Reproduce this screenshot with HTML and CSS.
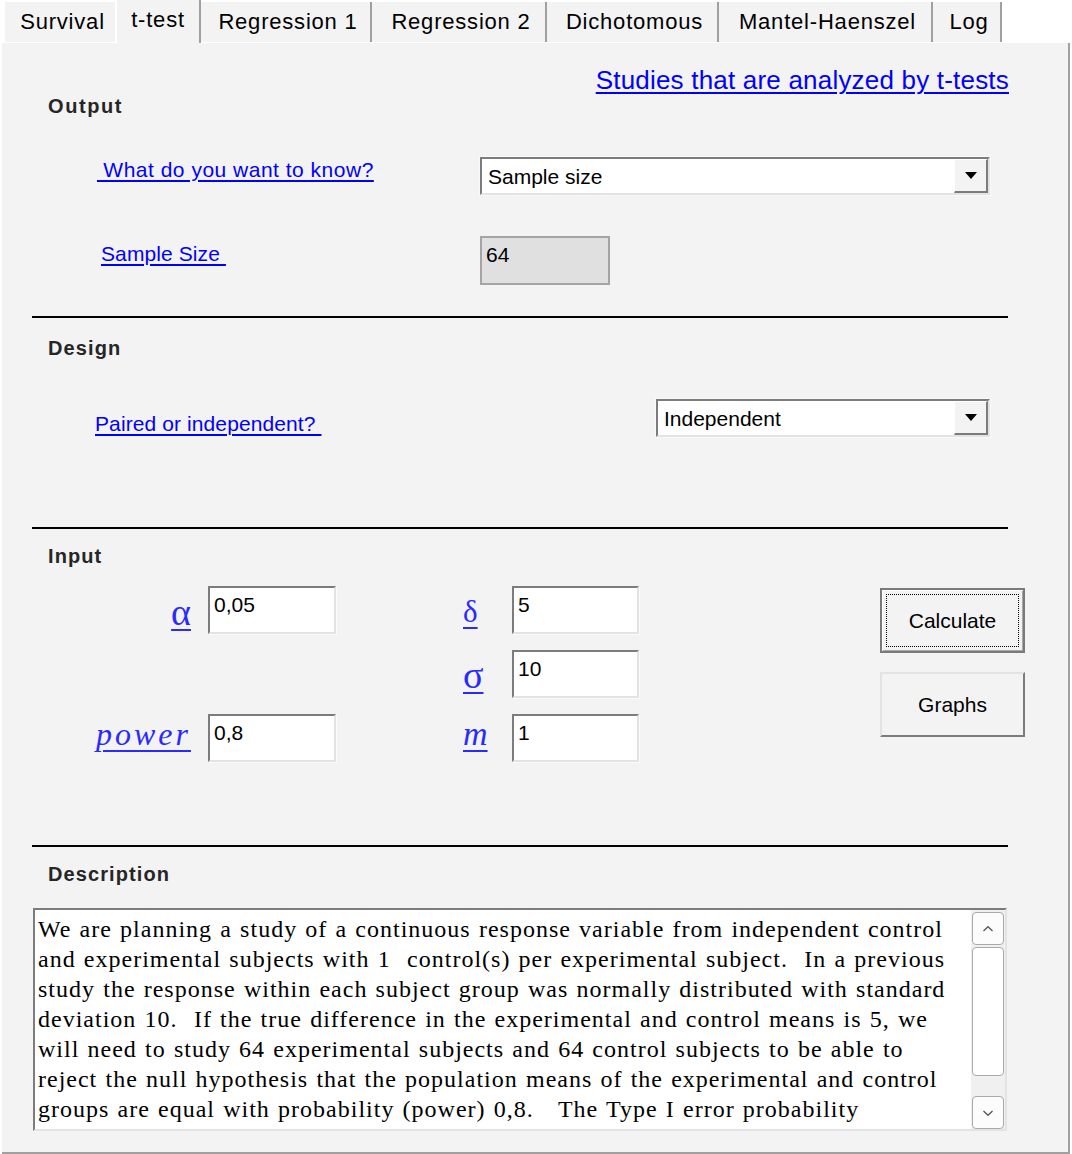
FILE: index.html
```html
<!DOCTYPE html>
<html lang="en">
<head>
<meta charset="utf-8">
<title>t-test</title>
<link rel="stylesheet" href="styles.css">
</head>
<body>
<div class="tabs">
  <div class="tab tab-survival">Survival</div>
  <div class="tab tab-active">t-test</div>
  <div class="tab tab-reg1">Regression 1</div>
  <div class="tab tab-reg2">Regression 2</div>
  <div class="tab tab-dich">Dichotomous</div>
  <div class="tab tab-mantel">Mantel-Haenszel</div>
  <div class="tab tab-log">Log</div>
</div>
<div class="panel">
  <div class="top-row">
    <h2 class="sec-title title-output">Output</h2>
    <a class="studies-link" href="#">Studies that are analyzed by t-tests</a>
  </div>
  <div class="form-row row-know">
    <a class="link link-know" href="#">&nbsp;What do you want to know?</a>
    <div class="combo combo-wide">
      <span class="combo-text">Sample size</span>
      <span class="combo-btn"><svg width="12" height="7" viewBox="0 0 12 7"><path d="M0 0H12L6 7Z" fill="#000"/></svg></span>
    </div>
  </div>
  <div class="form-row row-size">
    <a class="link link-size" href="#">Sample Size&nbsp;</a>
    <div class="readonly">64</div>
  </div>
  <div class="rule rule-1"></div>

  <h2 class="sec-title title-design">Design</h2>
  <div class="form-row row-design">
    <a class="link link-paired" href="#">Paired or independent?&nbsp;</a>
    <div class="combo combo-short">
      <span class="combo-text">Independent</span>
      <span class="combo-btn"><svg width="12" height="7" viewBox="0 0 12 7"><path d="M0 0H12L6 7Z" fill="#000"/></svg></span>
    </div>
  </div>
  <div class="rule rule-2"></div>

  <h2 class="sec-title title-input">Input</h2>
  <div class="input-grid">
    <a class="sym sym-alpha" href="#">α</a>
    <div class="field f-alpha">0,05</div>
    <a class="sym sym-power" href="#">power</a>
    <div class="field f-power">0,8</div>
    <a class="sym sym-delta" href="#">δ</a>
    <div class="field f-delta">5</div>
    <a class="sym sym-sigma" href="#">σ</a>
    <div class="field f-sigma">10</div>
    <a class="sym sym-m" href="#">m</a>
    <div class="field f-m">1</div>
    <div class="buttons">
      <div class="btn btn-default"><span class="btn-label">Calculate</span></div>
      <div class="btn btn-graphs"><span class="btn-label">Graphs</span></div>
    </div>
  </div>
  <div class="rule rule-3"></div>

  <h2 class="sec-title title-desc">Description</h2>
  <div class="memo">
    <div class="memo-text"><span class="memo-line">We are planning a study of a continuous response variable from independent control</span><span class="memo-line">and experimental subjects with 1  control(s) per experimental subject.  In a previous</span><span class="memo-line">study the response within each subject group was normally distributed with standard</span><span class="memo-line">deviation 10.  If the true difference in the experimental and control means is 5, we</span><span class="memo-line">will need to study 64 experimental subjects and 64 control subjects to be able to</span><span class="memo-line">reject the null hypothesis that the population means of the experimental and control</span><span class="memo-line">groups are equal with probability (power) 0,8.   The Type I error probability</span></div>
    <div class="scrollbar">
      <div class="sb-btn"><svg width="12" height="8" viewBox="0 0 12 8"><polyline points="1.5,6 6,1.8 10.5,6" fill="none" stroke="#5a5a5a" stroke-width="1.4"/></svg></div>
      <div class="sb-thumb"></div>
      <div class="sb-track"></div>
      <div class="sb-btn"><svg width="12" height="8" viewBox="0 0 12 8"><polyline points="1.5,2 6,6.2 10.5,2" fill="none" stroke="#5a5a5a" stroke-width="1.4"/></svg></div>
    </div>
  </div>
</div>
</body>
</html>
```

FILE: styles.css
```css
* { box-sizing: border-box; }
html, body { margin: 0; padding: 0; }
body {
  width: 1072px;
  height: 1154px;
  overflow: hidden;
  background: #ffffff;
  font-family: "Liberation Sans", Arial, sans-serif;
  font-size: 21px;
  color: #000;
}

/* ---------- tabs ---------- */
.tabs {
  display: flex;
  align-items: flex-start;
  height: 43px;
}
.tab {
  height: 40px;
  margin-top: 2px;
  padding-left: 5px;
  line-height: 40px;
  font-size: 22px;
  letter-spacing: 0.8px;
  text-align: center;
  white-space: nowrap;
  background: #f3f3f3;
  border-right: 2px solid #a0a0a0;
  color: #000;
}
.tab-survival { margin-left: 5px; margin-right: 2px; width: 110px; border-right: 0; }
.tab-active { margin-top: 0; height: 43px; width: 84px; padding-left: 0; line-height: 40px; }
.tab-reg1 { width: 171px; }
.tab-reg2 { width: 175px; }
.tab-dich { width: 172px; }
.tab-mantel { width: 214px; }
.tab-log { width: 69px; }

/* ---------- panel ---------- */
.panel {
  margin-left: 2px;
  width: 1068px;
  height: 1111px;
  padding-left: 30px;
  background: #f3f3f3;
  border-right: 2px solid #a0a0a0;
  border-bottom: 2px solid #a0a0a0;
}

.sec-title {
  margin: 0;
  margin-left: 16px;
  font-size: 20px;
  line-height: 24px;
  font-weight: bold;
  letter-spacing: 1.1px;
  color: #262626;
}
.top-row {
  display: flex;
  justify-content: space-between;
  align-items: flex-start;
  padding-top: 22px;
}
.title-output { margin-top: 29px; letter-spacing: 1.6px; }
.studies-link {
  margin-right: 59px;
  font-size: 26px;
  line-height: 30px;
  letter-spacing: 0.2px;
  color: #0000ff;
  text-decoration: underline;
  text-decoration-thickness: 2px;
  text-underline-offset: 3px;
}

a { color: #0000ff; }
.link {
  display: block;
  justify-self: start;
  font-size: 21px;
  line-height: 24px;
  letter-spacing: 0.3px;
  color: #0000ff;
  text-decoration: underline;
  text-decoration-thickness: 2px;
  text-underline-offset: 3px;
  white-space: pre;
}

.form-row {
  display: grid;
  align-items: start;
}
.row-know { grid-template-columns: 448px auto; margin-top: 39px; }
.row-size { grid-template-columns: 448px auto; margin-top: 41px; }
.row-design { grid-template-columns: 624px auto; margin-top: 39px; }
.link-know { margin-left: 65px; padding-top: 1px; letter-spacing: 0.5px; }
.link-size { margin-left: 69px; padding-top: 6px; letter-spacing: 0.1px; }
.link-paired { margin-left: 63px; padding-top: 13px; letter-spacing: 0.1px; }

/* combo box */
.combo {
  display: flex;
  height: 38px;
  background: #fff;
  border-style: solid;
  border-width: 2px;
  border-color: #7c7c7c #e3e3e3 #e3e3e3 #7c7c7c;
  box-shadow: 0 0 0 1px #f9f9f9;
}
.combo-wide { width: 510px; }
.combo-short { width: 334px; }
.combo-text {
  flex: 1;
  padding-left: 6px;
  padding-top: 3px;
  line-height: 30px;
  font-size: 21px;
  white-space: nowrap;
}
.combo-btn {
  width: 34px;
  display: flex;
  align-items: center;
  justify-content: center;
  background: #f3f3f3;
  border-style: solid;
  border-width: 1px 2px 2px 1px;
  border-color: #ffffff #7c7c7c #7c7c7c #ffffff;
}

.readonly {
  width: 130px;
  height: 49px;
  padding: 5px 0 0 4px;
  line-height: 24px;
  background: #e0e0e0;
  border: 2px solid #a4a4a4;
}

.rule {
  width: 976px;
  height: 2px;
  background: #000;
}
.rule-1 { margin-top: 31px; }
.rule-2 { margin-top: 90px; }
.rule-3 { margin-top: 83px; }

.title-design { margin-top: 18px; }
.title-input { margin-top: 15px; }
.title-desc { margin-top: 15px; }

/* ---------- input grid ---------- */
.input-grid {
  display: grid;
  grid-template-columns: 159px 17px 128px 127px 49px 127px 241px 145px;
  grid-template-rows: 48px 48px 48px;
  row-gap: 16px;
  margin-top: 18px;
}
.sym {
  display: block;
  font-family: "Liberation Serif", "DejaVu Serif", serif;
  font-size: 30px;
  line-height: 34px;
  color: #2a2aff;
  text-decoration: underline;
  text-decoration-thickness: 2px;
  text-underline-offset: 5px;
  justify-self: start;
}
.sym-alpha { grid-column: 1; grid-row: 1; justify-self: end; padding-top: 8px; font-size: 38px; line-height: 36px; text-underline-offset: 4px; }
.sym-power { grid-column: 1; grid-row: 3; justify-self: end; padding-top: 3px; font-style: italic; font-size: 32px; letter-spacing: 3px; }
.sym-delta { grid-column: 5; grid-row: 1; padding-top: 9px; font-size: 31px; }
.sym-sigma { grid-column: 5; grid-row: 2; padding-top: 7px; font-size: 38px; line-height: 36px; text-underline-offset: 4px; }
.sym-m { grid-column: 5; grid-row: 3; padding-top: 3px; font-style: italic; font-size: 34px; }

.field {
  height: 48px;
  padding: 5px 0 0 4px;
  line-height: 24px;
  font-size: 21px;
  background: #fff;
  border-style: solid;
  border-width: 2px;
  border-color: #7c7c7c #e3e3e3 #e3e3e3 #7c7c7c;
  box-shadow: 1px 1px 0 #fbfbfb;
}
.f-alpha { grid-column: 3; grid-row: 1; }
.f-power { grid-column: 3; grid-row: 3; }
.f-delta { grid-column: 6; grid-row: 1; }
.f-sigma { grid-column: 6; grid-row: 2; }
.f-m { grid-column: 6; grid-row: 3; }

.buttons {
  grid-column: 8;
  grid-row: 1 / span 3;
  display: flex;
  flex-direction: column;
  gap: 19px;
  padding-top: 2px;
}
.btn {
  position: relative;
  height: 65px;
  display: flex;
  align-items: center;
  justify-content: center;
  font-size: 21px;
  background: #f3f3f3;
}
.btn-default {
  border: 2px solid #7a7a7a;
  box-shadow: inset 1px 1px 0 #fdfdfd, inset -1px -1px 0 #a8a8a8;
}
.btn-default::after {
  content: "";
  position: absolute;
  inset: 4px;
  border: 1px dotted #000;
}
.btn-graphs {
  border-style: solid;
  border-width: 2px;
  border-color: #e3e3e3 #7c7c7c #7c7c7c #e3e3e3;
}

/* ---------- memo ---------- */
.memo {
  display: flex;
  margin-top: 22px;
  margin-left: 1px;
  width: 974px;
  height: 223px;
  background: #fff;
  border-style: solid;
  border-width: 2px;
  border-color: #7c7c7c #e3e3e3 #e3e3e3 #7c7c7c;
}
.memo-text {
  flex: 1;
  overflow: hidden;
  padding: 4px 0 0 3px;
  font-family: "Liberation Serif", "DejaVu Serif", serif;
  font-size: 24px;
  line-height: 30px;
  letter-spacing: 1px;
  word-spacing: 1.2px;
}
.memo-line {
  display: block;
  white-space: pre;
}
.scrollbar {
  width: 34px;
  display: flex;
  flex-direction: column;
  padding: 2px 1px 0 1px;
  background: #f0f0f0;
}
.sb-btn {
  height: 33px;
  display: flex;
  align-items: center;
  justify-content: center;
  background: #fcfcfc;
  border: 1px solid #aaaaaa;
  border-radius: 4px;
}
.sb-thumb {
  margin-top: 2px;
  height: 129px;
  background: #ffffff;
  border: 1px solid #aaaaaa;
  border-radius: 4px;
}
.sb-track { flex: 1; }
```
